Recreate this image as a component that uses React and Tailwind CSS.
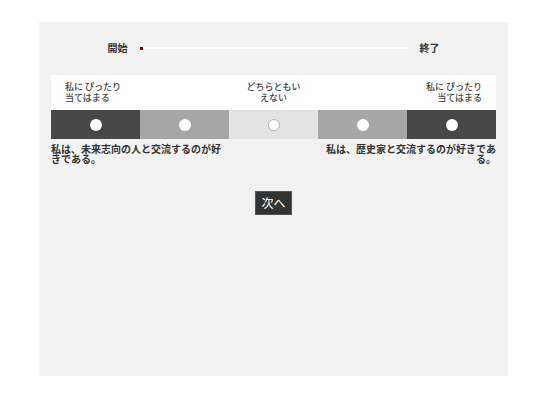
import React from 'react';

const cells = [
  { bg: 'bg-[#474747]', ring: false },
  { bg: 'bg-[#a6a6a4]', ring: false },
  { bg: 'bg-[#e3e3e3]', ring: true },
  { bg: 'bg-[#a6a6a4]', ring: false },
  { bg: 'bg-[#474747]', ring: false },
];

const App = () => {
  return (
    <div
      className="w-[550px] h-[411px] bg-white pt-[22px] pl-[39px]"
      style={{ fontFamily: '"Noto Sans CJK JP", "Noto Sans", sans-serif' }}
    >
      <div className="w-[469px] h-[354px] bg-[#f2f2f2] px-[12px]">
        {/* Progress */}
        <div className="flex items-center justify-center gap-[12px] pt-[19px] h-[33px] text-[10px] font-bold text-[#333]">
          <span className="leading-[14px]">開始</span>
          <div className="flex items-center w-[268px]">
            <div className="w-[3px] h-[3px] bg-[#8b0000]" />
            <div className="flex-1 h-[2px] bg-white" />
          </div>
          <span className="leading-[14px]">終了</span>
        </div>

        {/* Scale header */}
        <div className="mt-[20px] bg-white grid grid-cols-5 pt-[6px] pb-[7px] text-[9px] leading-[11px] font-medium text-[#444]">
          <div className="pl-[14px] text-left">
            <p>私に ぴったり</p>
            <p>当てはまる</p>
          </div>
          <div />
          <div className="text-center">
            <p>どちらともい</p>
            <p>えない</p>
          </div>
          <div />
          <div className="pr-[14px] text-right">
            <p>私に ぴったり</p>
            <p>当てはまる</p>
          </div>
        </div>

        {/* Scale */}
        <div className="grid grid-cols-5 h-[29px]">
          {cells.map((c, i) => (
            <div key={i} className={`${c.bg} flex items-center justify-center`}>
              <div
                className={
                  c.ring
                    ? 'w-[12px] h-[12px] rounded-full bg-white border border-[#b5b5b5]'
                    : 'w-[12px] h-[12px] rounded-full bg-white'
                }
              />
            </div>
          ))}
        </div>

        {/* Statements */}
        <div className="flex justify-between mt-[5px] text-[10px] leading-[10px] font-bold text-[#333]">
          <p className="w-[178px] text-left">私は、未来志向の人と交流するのが好きである。</p>
          <p className="w-[178px] text-right">私は、歴史家と交流するのが好きである。</p>
        </div>

        {/* Next */}
        <div className="flex justify-center mt-[27px]">
          <button className="w-[37px] h-[24px] bg-[#333] border border-[#555] text-white text-[12px] leading-none">
            次へ
          </button>
        </div>
      </div>
    </div>
  );
};

export default App;
